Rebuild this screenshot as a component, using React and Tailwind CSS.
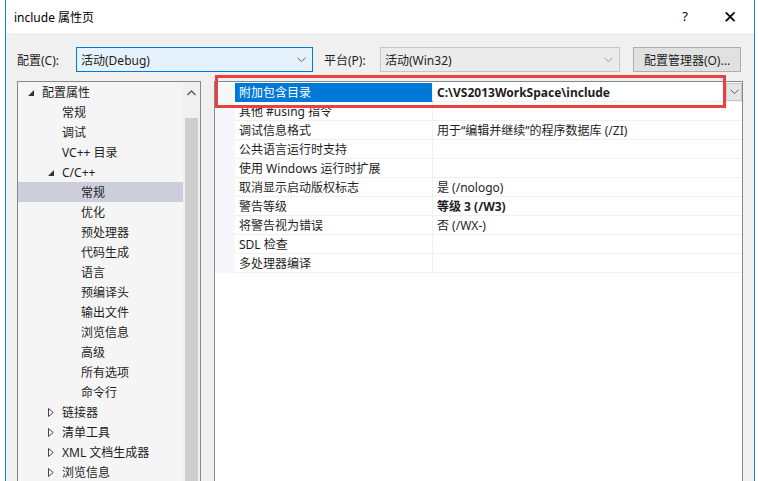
import React from 'react';

const FONT = { fontFamily: '"Noto Sans", "Noto Sans CJK SC", sans-serif' };

const TREE = [
    { label: '配置属性', level: 0, arrow: 'open' },
    { label: '常规', level: 1 },
    { label: '调试', level: 1 },
    { label: 'VC++ 目录', level: 1 },
    { label: 'C/C++', level: 1, arrow: 'open' },
    { label: '常规', level: 2, selected: true },
    { label: '优化', level: 2 },
    { label: '预处理器', level: 2 },
    { label: '代码生成', level: 2 },
    { label: '语言', level: 2 },
    { label: '预编译头', level: 2 },
    { label: '输出文件', level: 2 },
    { label: '浏览信息', level: 2 },
    { label: '高级', level: 2 },
    { label: '所有选项', level: 2 },
    { label: '命令行', level: 2 },
    { label: '链接器', level: 1, arrow: 'closed' },
    { label: '清单工具', level: 1, arrow: 'closed' },
    { label: 'XML 文档生成器', level: 1, arrow: 'closed' },
    { label: '浏览信息', level: 1, arrow: 'closed' },
];

const PROPS = [
    { name: '附加包含目录', value: 'C:\\VS2013WorkSpace\\include', bold: true, selected: true },
    { name: '其他 #using 指令', value: '' },
    { name: '调试信息格式', value: '用于“编辑并继续”的程序数据库 (/ZI)' },
    { name: '公共语言运行时支持', value: '' },
    { name: '使用 Windows 运行时扩展', value: '' },
    { name: '取消显示启动版权标志', value: '是 (/nologo)' },
    { name: '警告等级', value: '等级 3 (/W3)', bold: true },
    { name: '将警告视为错误', value: '否 (/WX-)' },
    { name: 'SDL 检查', value: '' },
    { name: '多处理器编译', value: '' },
];

const Chevron = ({ color = '#606060' }) => (
    <svg width="9" height="6" viewBox="0 0 9 6">
        <path d="M0.5 0.8 L4.5 4.6 L8.5 0.8" fill="none" stroke={color} strokeWidth="1" />
    </svg>
);

// tree expander: filled corner for open, hollow triangle for closed
const Expander = ({ type }) => {
    if (type === 'open') {
        return (
            <svg width="6" height="6" viewBox="0 0 6 6">
                <polygon points="6,0 6,6 0,6" fill="#333" />
            </svg>
        );
    }
    return (
        <svg width="6" height="9" viewBox="0 0 6 9">
            <polygon points="0.5,0.5 5.2,4.5 0.5,8.5" fill="none" stroke="#444" strokeWidth="1" />
        </svg>
    );
};

const TreeRow = ({ item }) => {
    const indent = item.level === 0 ? 'pl-[24px]' : item.level === 1 ? 'pl-[44px]' : 'pl-[63px]';
    return (
        <div className={`h-[20px] flex items-center text-[12px] text-[#1e1e1e] ${item.selected ? 'bg-[#cccedb]' : ''}`}>
            <div className={`flex items-center ${item.arrow ? '' : indent}`}>
                {item.arrow && (
                    <div className={`${item.level === 0 ? 'w-[24px] pl-[10px]' : 'w-[44px] pl-[30px]'} flex items-center pt-[1px]`}>
                        <Expander type={item.arrow} />
                    </div>
                )}
                <span className="pt-[2px]">{item.label}</span>
            </div>
        </div>
    );
};

const PropRow = ({ p }) => (
    <div className="h-[19px] flex text-[12px] text-[#1e1e1e]">
        <div className="w-[20px] bg-[#f5f7fa]" />
        <div className={`w-[198px] flex items-center pl-[4px] border-b border-r border-[#f0f0f0] ${p.selected ? 'bg-[#0078d7] text-white border-b-[#0078d7]' : ''}`}>
            <span className="whitespace-nowrap pt-[2px]">{p.name}</span>
        </div>
        <div className="flex-1 flex items-center border-b border-[#f0f0f0]">
            <span className={`pl-[4px] pt-[2px] flex-1 whitespace-nowrap ${p.bold ? 'font-bold' : ''}`}>{p.value}</span>
            {p.selected && (
                <div className="w-[16px] h-[18px] bg-[#e6e6e6] border border-[#c8c8c8] flex items-center justify-center">
                    <Chevron />
                </div>
            )}
        </div>
    </div>
);

export default function App() {
    return (
        <div className="w-[758px] h-[481px] bg-white relative overflow-hidden" style={FONT}>
            <div className="ml-[5px] w-[750px] h-full border-x border-[#1883d7] flex flex-col">

                {/* title bar */}
                <div className="h-[33px] bg-white flex items-center shrink-0">
                    <span className="pl-[8px] pt-[2px] text-[12px] text-black">include 属性页</span>
                    <span className="ml-auto w-[20px] text-center text-[13px] text-black mr-[25px]">?</span>
                    <span className="w-[20px] text-center text-[17px] leading-none text-black font-light mr-[14px]">✕</span>
                </div>

                {/* body */}
                <div className="flex-1 bg-[#f0f0f0] flex flex-col min-h-0">
                    <div className="h-[25px] mt-[14px] flex items-center text-[12px] text-[#1e1e1e] shrink-0">
                        <span className="ml-[11px] w-[59px] pt-[2px]">配置(C):</span>
                        <div className="w-[237px] h-[25px] bg-[#e5f1fb] border border-[#0078d7] flex items-center pl-[4px] pr-[6px]">
                            <span className="flex-1 pt-[2px]">活动(Debug)</span>
                            <Chevron />
                        </div>
                        <span className="ml-[11px] w-[56px] pt-[2px]">平台(P):</span>
                        <div className="w-[240px] h-[25px] bg-[#ebebeb] border border-[#c5c5c5] flex items-center pl-[4px] pr-[6px]">
                            <span className="flex-1 pt-[2px]">活动(Win32)</span>
                            <Chevron color="#9a9a9a" />
                        </div>
                        <div className="ml-[13px] w-[108px] h-[25px] pt-[2px] bg-[#e1e1e1] border border-[#adadad] flex items-center justify-center">
                            配置管理器(O)...
                        </div>
                    </div>

                    <div className="flex-1 mt-[9px] flex min-h-0">
                        {/* tree */}
                        <div className="ml-[11px] w-[184px] h-[420px] border border-[#828790] bg-[#f5f5f5] flex">
                            <div className="flex-1">
                                {TREE.map((t, i) => <TreeRow key={i} item={t} />)}
                            </div>
                            <div className="w-[17px] bg-[#f0f0f0] flex flex-col items-center">
                                <div className="h-[22px] flex items-center justify-center">
                                    <svg width="9" height="6" viewBox="0 0 9 6">
                                        <path d="M0.5 5 L4.5 1 L8.5 5" fill="none" stroke="#555" strokeWidth="1.3" />
                                    </svg>
                                </div>
                                <div className="mt-[14px] w-[13px] flex-1 bg-[#cdcdcd]" />
                            </div>
                        </div>

                        {/* property grid */}
                        <div className="ml-[13px] w-[529px] h-[420px] border border-[#828790] bg-white pt-px">
                            {PROPS.map((p, i) => <PropRow key={i} p={p} />)}
                        </div>
                    </div>
                </div>
            </div>

            {/* annotation */}
            <div className="absolute left-[215px] top-[75px] w-[511px] h-[33px] border-[3px] border-[#e8413f]" />
        </div>
    );
}
